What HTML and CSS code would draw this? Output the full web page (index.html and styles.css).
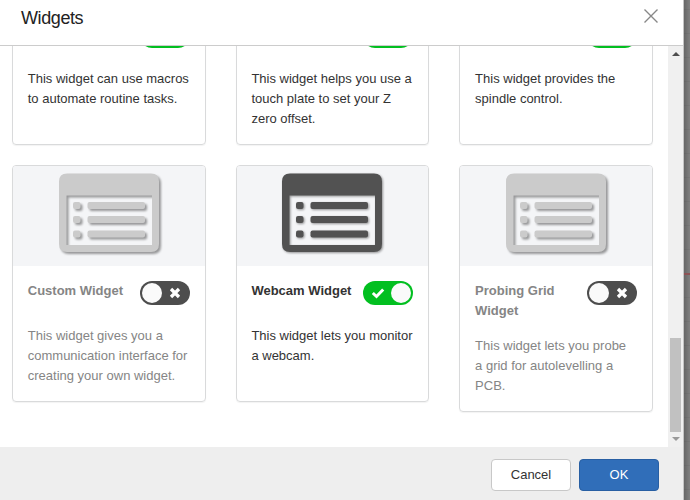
FILE: index.html
```
<!DOCTYPE html>
<html lang="en">
<head>
<meta charset="utf-8">
<title>Widgets</title>
<link rel="stylesheet" href="styles.css">
</head>
<body>
<svg class="defs" aria-hidden="true">
  <symbol id="panel" viewBox="0 0 110 90">
    <path fill-rule="evenodd" d="M13 2.500H97Q105 2.500 105 10.500V73Q105 81 97 81H13Q5 81 5 73V10.500Q5 2.500 13 2.500ZM12.500 24.500V74H98V24.500Z"/>
    <rect x="19" y="31" width="7.500" height="7" rx="2"/>
    <rect x="19" y="45" width="7.500" height="7" rx="2"/>
    <rect x="19" y="59.500" width="7.500" height="7" rx="2"/>
    <rect x="33.500" y="31" width="57.500" height="7" rx="2"/>
    <rect x="33.500" y="45" width="57.500" height="7" rx="2"/>
    <rect x="33.500" y="59.500" width="57.500" height="7" rx="2"/>
  </symbol>
  <symbol id="check" viewBox="0 0 14 12"><path d="M1.800 6L5.500 9.500L12.200 2.500" fill="none" stroke="#fff" stroke-width="3"/></symbol>
  <symbol id="cross" viewBox="0 0 12 12"><path d="M2 2L10 10M10 2L2 10" fill="none" stroke="#fff" stroke-width="3.300"/></symbol>
</svg>
<div class="modal">
  <header class="modal-header">
    <h1>Widgets</h1>
    <svg class="close" viewBox="0 0 14 14"><path d="M.5 .5L13.500 13.500M13.500 .5L.5 13.500"/></svg>
  </header>
  <div class="modal-body">
    <div class="viewport">
      <div class="cards">
        <article class="card">
          <div class="image"></div>
          <div class="content">
            <div class="heading"><span class="toggle on"><i></i></span></div>
            <p>This widget can use macros to automate routine tasks.</p>
          </div>
        </article>
        <article class="card">
          <div class="image"></div>
          <div class="content">
            <div class="heading"><span class="toggle on"><i></i></span></div>
            <p>This widget helps you use a touch plate to set your Z zero offset.</p>
          </div>
        </article>
        <article class="card">
          <div class="image"></div>
          <div class="content">
            <div class="heading"><span class="toggle on"><i></i></span></div>
            <p>This widget provides the spindle control.</p>
          </div>
        </article>
        <article class="card disabled">
          <div class="image"><svg class="panel"><use href="#panel"/></svg></div>
          <div class="content">
            <div class="heading"><h2>Custom Widget</h2><span class="toggle"><i></i><svg class="cross"><use href="#cross"/></svg></span></div>
            <p>This widget gives you a communication interface for creating your own widget.</p>
          </div>
        </article>
        <article class="card">
          <div class="image"><svg class="panel"><use href="#panel"/></svg></div>
          <div class="content">
            <div class="heading"><h2>Webcam Widget</h2><span class="toggle on"><i></i><svg class="check"><use href="#check"/></svg></span></div>
            <p>This widget lets you monitor a webcam.</p>
          </div>
        </article>
        <article class="card disabled">
          <div class="image"><svg class="panel"><use href="#panel"/></svg></div>
          <div class="content">
            <div class="heading"><h2>Probing Grid Widget</h2><span class="toggle"><i></i><svg class="cross"><use href="#cross"/></svg></span></div>
            <p>This widget lets you probe a grid for autolevelling a PCB.</p>
          </div>
        </article>
      </div>
    </div>
    <div class="scrollbar">
      <svg class="arrow up" viewBox="0 0 8 4"><path d="M4 0L8 4H0Z"/></svg>
      <div class="thumb"></div>
      <svg class="arrow down" viewBox="0 0 8 4"><path d="M0 0H8L4 4Z"/></svg>
    </div>
  </div>
  <footer class="modal-footer">
    <button class="btn">Cancel</button>
    <button class="btn primary">OK</button>
  </footer>
</div>
<div class="backdrop"><div class="axis"></div></div>
</body>
</html>
```
FILE: styles.css
```
* { box-sizing: border-box; }
body {
  margin: 0;
  width: 690px;
  height: 500px;
  overflow: hidden;
  display: flex;
  background: #7b7b7b;
  color: #333;
  font: 13px/20px "Liberation Sans", Arial, sans-serif;
}
h1, h2, p { margin: 0; }
.defs { display: none; }
.modal {
  width: 684px;
  height: 500px;
  flex: none;
  display: flex;
  flex-direction: column;
  background: #fff;
  border-right: 1px solid #c4c4c4;
}
.modal-header {
  height: 46px;
  flex: none;
  display: flex;
  justify-content: space-between;
  align-items: flex-start;
  padding: 8px 25px 0 21px;
  border-bottom: 1px solid #ccc;
}
h1 {
  font-size: 18px;
  line-height: 20px;
  font-weight: 400;
  letter-spacing: -.4px;
  color: #222;
}
.close {
  width: 14px;
  height: 14px;
  margin-top: 1px;
  fill: none;
  stroke: #888;
  stroke-width: 1.4;
  overflow: visible;
}
.modal-body {
  height: 401px;
  flex: none;
  display: flex;
}
.viewport {
  flex: 1;
  overflow: hidden;
}
.cards {
  display: grid;
  grid-template-columns: repeat(3, 1fr);
  gap: 20px 30px;
  align-items: start;
  margin: -138px 15px 0 12px;
}
.card {
  min-height: 237px;
  border: 1px solid #d9dadb;
  border-radius: 4px;
  box-shadow: 0 1px 1px rgba(0, 0, 0, .05);
  overflow: hidden;
}
.image {
  height: 100px;
  display: flex;
  justify-content: center;
  padding-top: 5px;
  background: #f4f5f7;
}
.panel {
  width: 110px;
  height: 90px;
  fill: #525252;
  filter: drop-shadow(1px 1.500px 1.200px rgba(0, 0, 0, .4));
}
.disabled .panel {
  fill: #cbcbcb;
  filter: drop-shadow(2px 2px .8px rgba(0, 0, 0, .38));
}
.content { padding: 15px 15px 15px 14.750px; }
.content p { margin-right: .4px; }
.heading {
  display: flex;
  justify-content: space-between;
  align-items: flex-start;
  min-height: 30px;
  margin-bottom: 15px;
}
h2 { font-size: 13px; line-height: 20px; font-weight: 700; }
.disabled h2, .disabled p { color: #858585; }
.toggle {
  display: flex;
  align-items: center;
  justify-content: space-between;
  flex: none;
  width: 50px;
  height: 24px;
  margin-left: auto;
  padding: 0 9px 0 2px;
  border-radius: 12px;
  background: #4d4d4d;
}
.toggle.on {
  flex-direction: row-reverse;
  padding: 0 2px 0 8px;
  background: #02bf20;
}
.toggle i {
  width: 20px;
  height: 20px;
  border-radius: 50%;
  background: #fafafa;
}
.cross { width: 12px; height: 12px; }
.check { width: 14px; height: 12px; }
.scrollbar {
  width: 15px;
  display: flex;
  flex-direction: column;
  align-items: center;
  background: #f0f0f0;
}
.arrow { width: 8px; height: 4px; }
.up { margin: 6px 0 282px; fill: #4d4d4d; }
.down { margin-top: 5px; fill: #999; }
.thumb {
  width: 11px;
  height: 94px;
  background: #c1c1c1;
}
.modal-footer {
  flex: 1;
  display: flex;
  justify-content: flex-end;
  gap: 8px;
  padding: 12px 24px 0 0;
  background: #eee;
}
.btn {
  width: 80px;
  height: 32px;
  padding: 0;
  border: 1px solid #c8c8c8;
  border-radius: 4px;
  background: #fff;
  color: #333;
  font: inherit;
}
.btn.primary {
  border-color: #285fa3;
  background: #306eb9;
  color: #fff;
}
.backdrop {
  flex: 1;
  padding-top: 273px;
  background:
    linear-gradient(90deg, rgba(0, 0, 0, .2), transparent),
    repeating-linear-gradient(#808080 0 9px, #7a7a7a 9px 10px, #808080 10px 24px);
}
.axis { height: 2px; background: #8d5255; }
```
